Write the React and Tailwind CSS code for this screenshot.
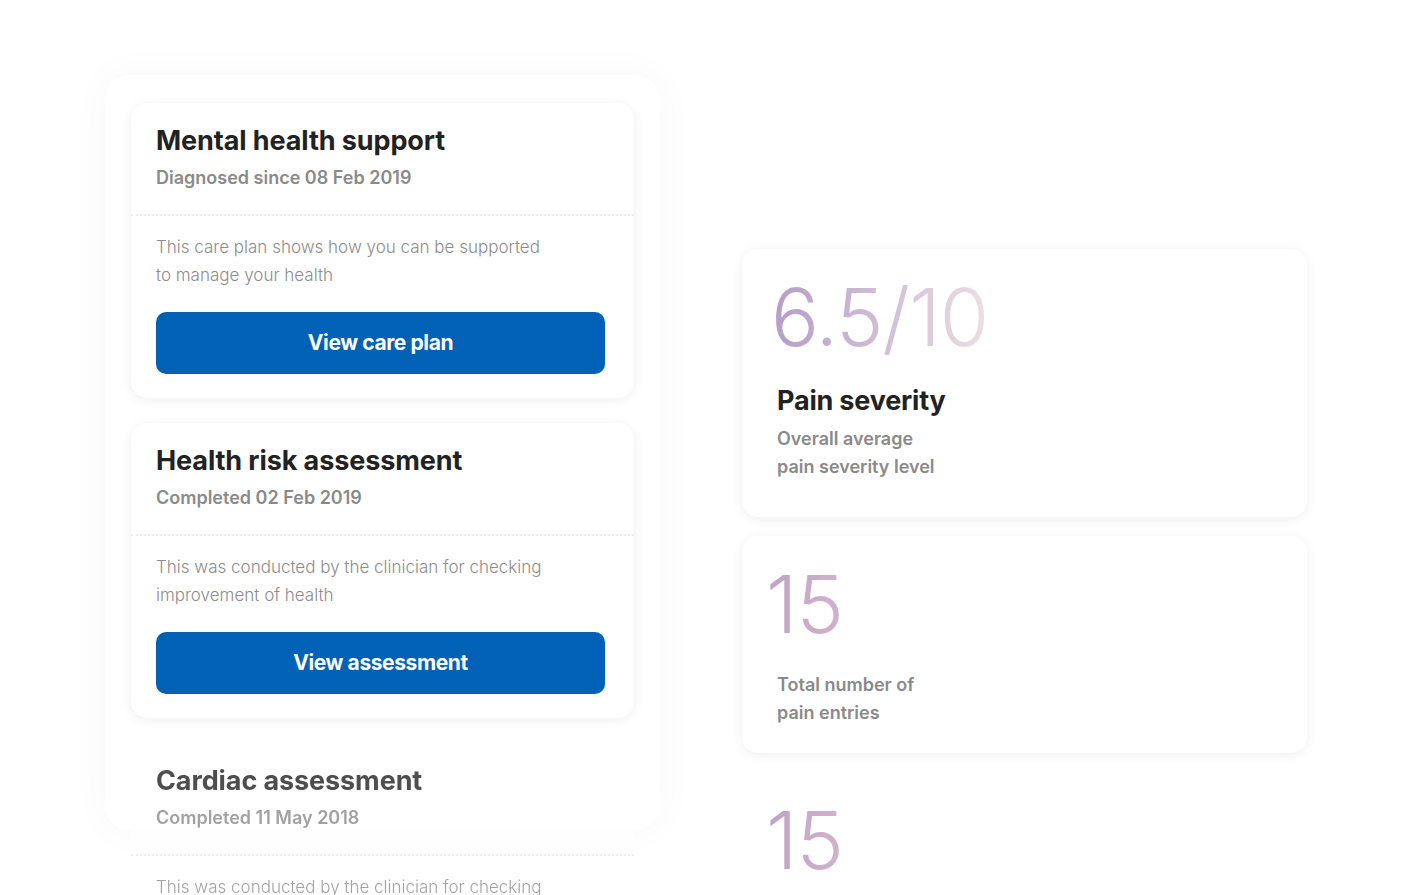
const care = [
  {
    title: "Mental health support",
    sub: "Diagnosed since 08 Feb 2019",
    body: ["This care plan shows how you can be supported", "to manage your health"],
    action: "View care plan",
  },
  {
    title: "Health risk assessment",
    sub: "Completed 02 Feb 2019",
    body: ["This was conducted by the clinician for checking", "improvement of health"],
    action: "View assessment",
  },
  {
    title: "Cardiac assessment",
    sub: "Completed 11 May 2018",
    body: ["This was conducted by the clinician for checking", "improvement of health"],
    action: "View assessment",
    faded: true,
  },
];

const stats = [
  { value: "6.5/10", title: "Pain severity", lines: ["Overall average", "pain severity level"], wide: true },
  { value: "15", lines: ["Total number of", "pain entries"] },
  { value: "15", lines: ["Total number of", "pain entries"], bare: true },
];

const sans = { fontFamily: "Inter, 'Liberation Sans', sans-serif" };

const CareCard = ({ item }) => (
  <div
    className={
      "shrink-0 rounded-2xl bg-white " +
      (item.faded ? "opacity-80" : "shadow-[0_2px_12px_rgba(0,0,0,0.07)]")
    }
  >
    <div className="px-[25px] pt-[20px] pb-[18px]">
      <h2 className="text-[27px] font-bold leading-[36px] tracking-[-0.1px] text-[#222]">{item.title}</h2>
      <p className="mt-[1px] text-[18px] font-semibold leading-[36px] text-[#8a8a8a]">{item.sub}</p>
    </div>
    <div className="border-t-2 border-dotted border-[#ebebeb]" />
    <div className="pl-[25px] pr-[29px] pt-[17px] pb-[24px]">
      <p className="text-[17px] font-light leading-[28px] text-[#8c8c8c]">
        {item.body[0]}
        <br />
        {item.body[1]}
      </p>
      <button className="mt-[23px] h-[62px] w-full rounded-[10px] bg-[#0061b7] text-[21px] font-bold tracking-[-0.4px] text-white">
        {item.action}
      </button>
    </div>
  </div>
);

const StatCard = ({ item }) => (
  <div
    className={
      "flex shrink-0 flex-col rounded-2xl bg-white pl-[35px] " +
      (item.bare ? "" : "shadow-[0_2px_12px_rgba(0,0,0,0.07)] ") +
      (item.title ? "h-[268px]" : "h-[217px]")
    }
  >
    <div
      className={
        "mt-[22px] w-fit bg-clip-text text-[80px] font-light leading-[92px] tracking-[-1px] text-transparent " +
        (item.wide
          ? "-ml-[6px] bg-gradient-to-r from-[#b49dc8] to-[#ecdfe2]"
          : "-ml-[11px] bg-gradient-to-r from-[#bea2c6] to-[#d2b3cd]")
      }
    >
      {item.value}
    </div>
    {item.title && (
      <h3 className="mt-[21px] text-[27px] font-bold leading-[34px] tracking-[-0.2px] text-[#222]">{item.title}</h3>
    )}
    <p
      className={
        "text-[18px] font-semibold leading-[28px] text-[#8a8a8a] " +
        (item.title ? "mt-[7px]" : "mt-[21px]")
      }
    >
      {item.lines[0]}
      <br />
      {item.lines[1]}
    </p>
  </div>
);

export default function App() {
  return (
    <div className="h-[895px] w-[1424px] overflow-hidden bg-white" style={sans}>
      <div className="flex pl-[105px]">
        <div className="mt-[75px] h-[755px] w-[555px] shrink-0 rounded-3xl bg-white shadow-[0_0_40px_rgba(0,0,0,0.035)]">
          <div className="flex flex-col gap-[25px] px-[26px] pt-[28px]">
            {care.map((item) => (
              <CareCard key={item.title} item={item} />
            ))}
          </div>
        </div>
        <div className="ml-[82px] mt-[249px] flex w-[565px] shrink-0 flex-col gap-[19px]">
          {stats.map((item, i) => (
            <StatCard key={i} item={item} />
          ))}
        </div>
      </div>
    </div>
  );
}
